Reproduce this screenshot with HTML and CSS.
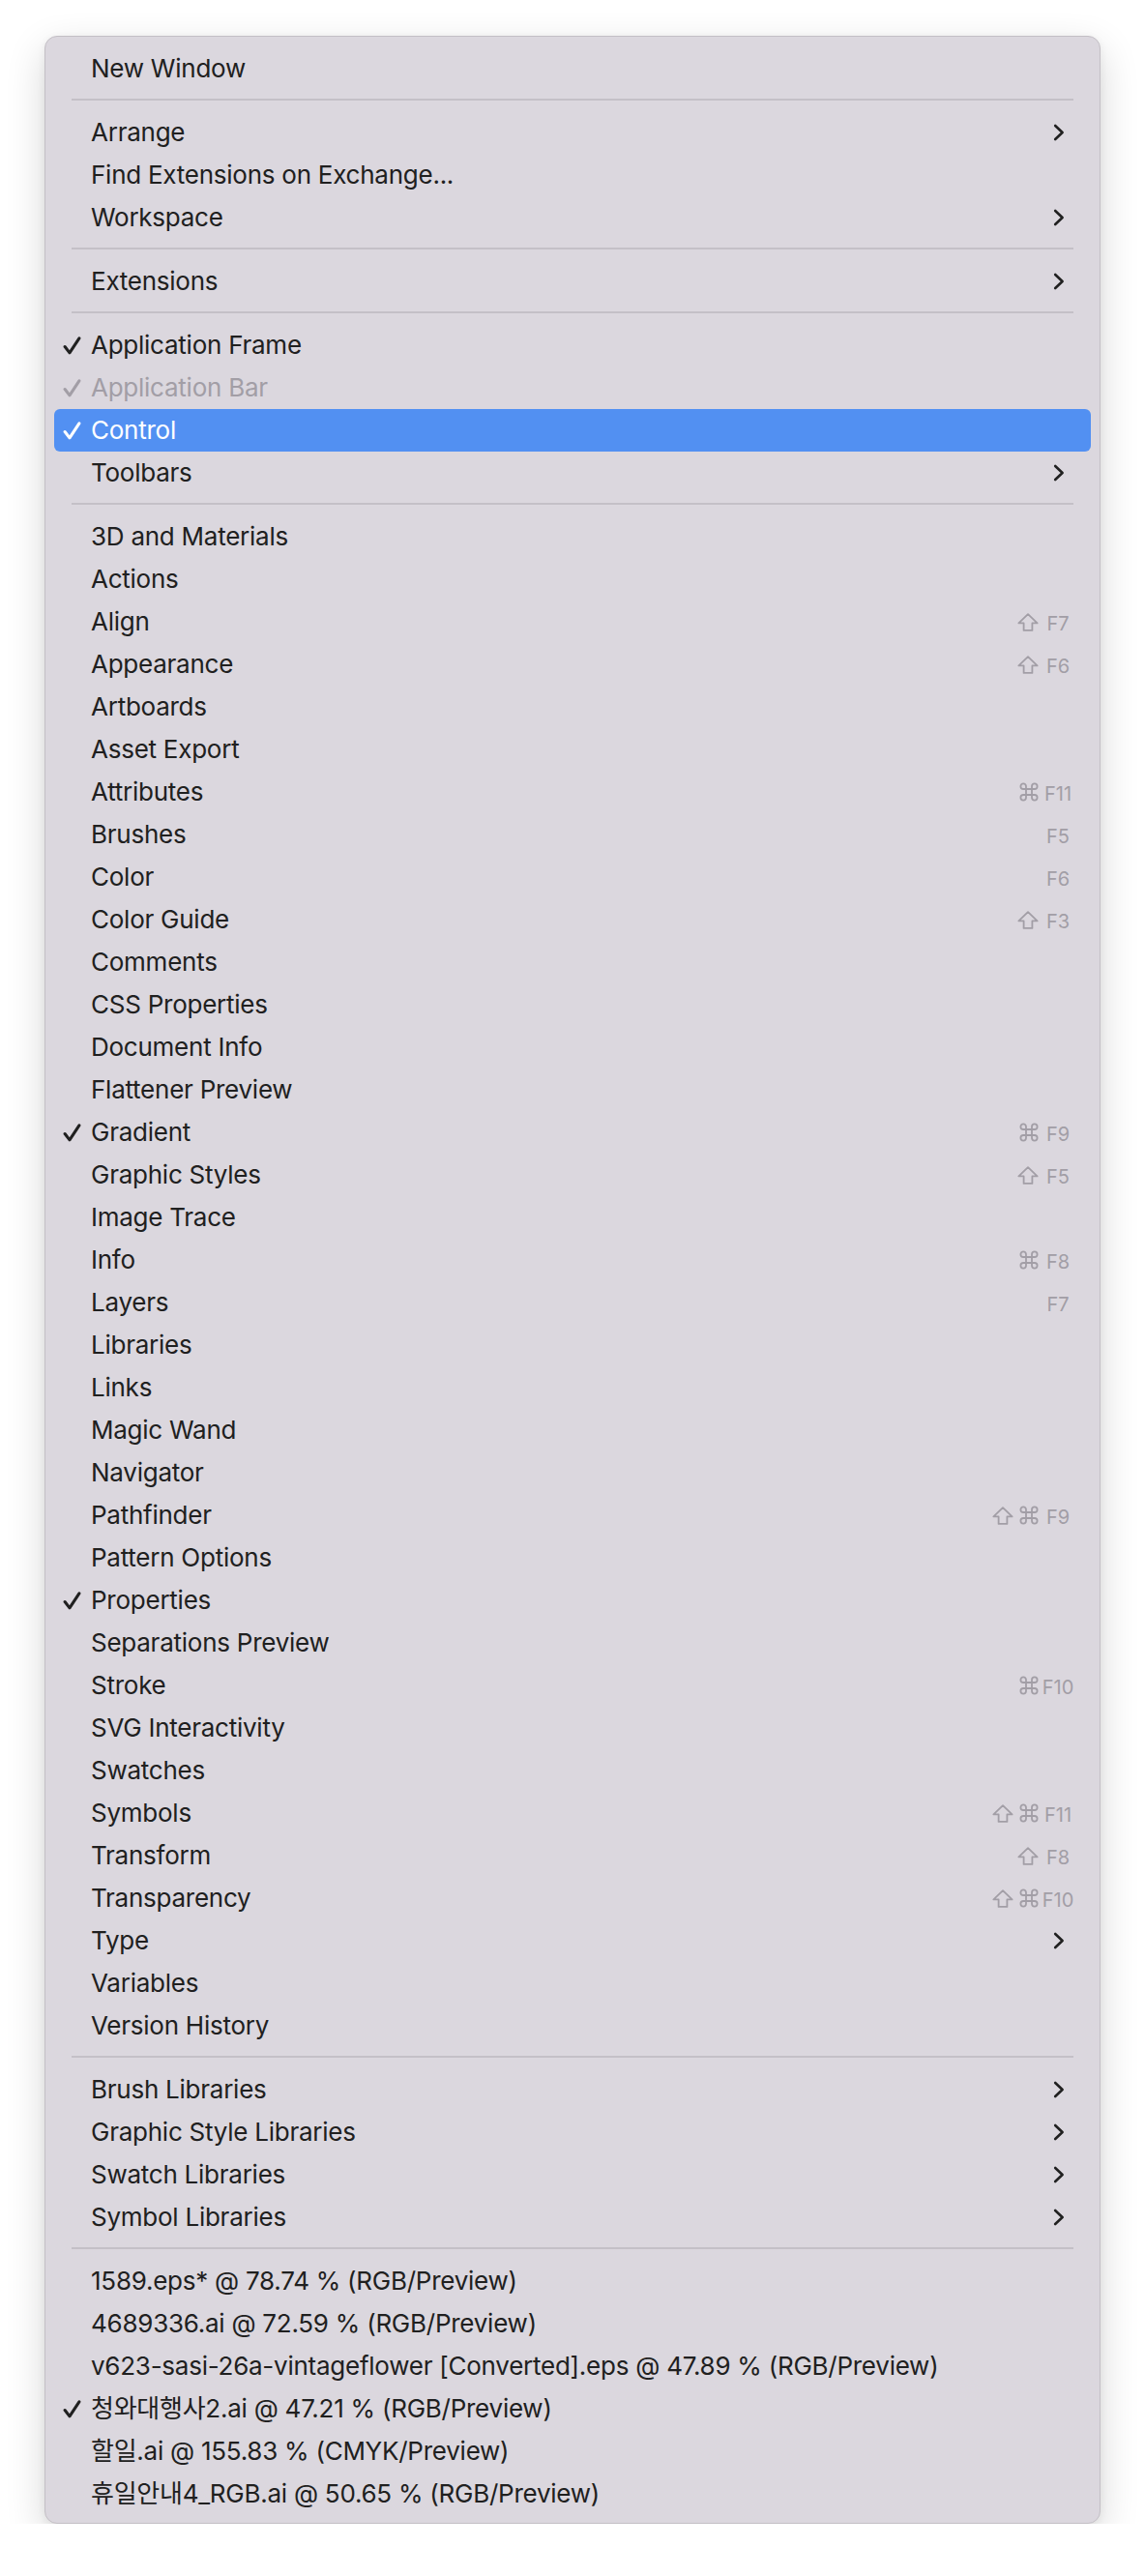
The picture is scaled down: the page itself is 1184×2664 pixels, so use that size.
FILE: index.html
```html
<!DOCTYPE html>
<html>
<head>
<meta charset="utf-8">
<link rel="stylesheet" href="styles.css">
</head>
<body>
<svg width="0" height="0" class="defs">
  <defs>
    <symbol id="chk" viewBox="0 0 18 18"><path d="M2 10 L6.6 16 L16 1.8" fill="none" stroke="currentColor" stroke-width="2.9" stroke-linecap="round" stroke-linejoin="round"/></symbol>
    <symbol id="chev" viewBox="0 0 12 18"><path d="M2.2 2 L9.6 9 L2.2 16" fill="none" stroke="currentColor" stroke-width="2.6" stroke-linecap="round" stroke-linejoin="round"/></symbol>
    <symbol id="shift" viewBox="0 0 22 19"><path d="M11 1.2 L1.4 10.4 H6.6 V17.9 H15.4 V10.4 H20.6 Z" fill="none" stroke="currentColor" stroke-width="1.8" stroke-linejoin="round"/></symbol>
    <symbol id="cmd" viewBox="0 0 20 20"><path d="M7 4.2 V15.8 M13 4.2 V15.8 M4.2 7 H15.8 M4.2 13 H15.8 M7 4.2 A2.8 2.8 0 1 0 4.2 7 M13 4.2 A2.8 2.8 0 1 1 15.8 7 M4.2 13 A2.8 2.8 0 1 0 7 15.8 M13 15.8 A2.8 2.8 0 1 0 15.8 13" fill="none" stroke="currentColor" stroke-width="1.8"/></symbol>
  </defs>
</svg>
<div class="menu">
  <div class="item"><span class="check"></span><span class="label">New Window</span></div>
  <div class="sep"></div>
  <div class="item"><span class="check"></span><span class="label">Arrange</span><svg class="chev"><use href="#chev"/></svg></div>
  <div class="item"><span class="check"></span><span class="label">Find Extensions on Exchange...</span></div>
  <div class="item"><span class="check"></span><span class="label">Workspace</span><svg class="chev"><use href="#chev"/></svg></div>
  <div class="sep"></div>
  <div class="item"><span class="check"></span><span class="label">Extensions</span><svg class="chev"><use href="#chev"/></svg></div>
  <div class="sep"></div>
  <div class="item"><span class="check"><svg><use href="#chk"/></svg></span><span class="label">Application Frame</span></div>
  <div class="item disabled"><span class="check"><svg><use href="#chk"/></svg></span><span class="label">Application Bar</span></div>
  <div class="item active"><span class="check"><svg><use href="#chk"/></svg></span><span class="label">Control</span></div>
  <div class="item"><span class="check"></span><span class="label">Toolbars</span><svg class="chev"><use href="#chev"/></svg></div>
  <div class="sep"></div>
  <div class="item"><span class="check"></span><span class="label">3D and Materials</span></div>
  <div class="item"><span class="check"></span><span class="label">Actions</span></div>
  <div class="item"><span class="check"></span><span class="label">Align</span><span class="sc"><span class="mods"><svg class="shift"><use href="#shift"/></svg></span><span class="key">F7</span></span></div>
  <div class="item"><span class="check"></span><span class="label">Appearance</span><span class="sc"><span class="mods"><svg class="shift"><use href="#shift"/></svg></span><span class="key">F6</span></span></div>
  <div class="item"><span class="check"></span><span class="label">Artboards</span></div>
  <div class="item"><span class="check"></span><span class="label">Asset Export</span></div>
  <div class="item"><span class="check"></span><span class="label">Attributes</span><span class="sc"><span class="mods"><svg class="cmd"><use href="#cmd"/></svg></span><span class="key">F11</span></span></div>
  <div class="item"><span class="check"></span><span class="label">Brushes</span><span class="sc"><span class="key">F5</span></span></div>
  <div class="item"><span class="check"></span><span class="label">Color</span><span class="sc"><span class="key">F6</span></span></div>
  <div class="item"><span class="check"></span><span class="label">Color Guide</span><span class="sc"><span class="mods"><svg class="shift"><use href="#shift"/></svg></span><span class="key">F3</span></span></div>
  <div class="item"><span class="check"></span><span class="label">Comments</span></div>
  <div class="item"><span class="check"></span><span class="label">CSS Properties</span></div>
  <div class="item"><span class="check"></span><span class="label">Document Info</span></div>
  <div class="item"><span class="check"></span><span class="label">Flattener Preview</span></div>
  <div class="item"><span class="check"><svg><use href="#chk"/></svg></span><span class="label">Gradient</span><span class="sc"><span class="mods"><svg class="cmd"><use href="#cmd"/></svg></span><span class="key">F9</span></span></div>
  <div class="item"><span class="check"></span><span class="label">Graphic Styles</span><span class="sc"><span class="mods"><svg class="shift"><use href="#shift"/></svg></span><span class="key">F5</span></span></div>
  <div class="item"><span class="check"></span><span class="label">Image Trace</span></div>
  <div class="item"><span class="check"></span><span class="label">Info</span><span class="sc"><span class="mods"><svg class="cmd"><use href="#cmd"/></svg></span><span class="key">F8</span></span></div>
  <div class="item"><span class="check"></span><span class="label">Layers</span><span class="sc"><span class="key">F7</span></span></div>
  <div class="item"><span class="check"></span><span class="label">Libraries</span></div>
  <div class="item"><span class="check"></span><span class="label">Links</span></div>
  <div class="item"><span class="check"></span><span class="label">Magic Wand</span></div>
  <div class="item"><span class="check"></span><span class="label">Navigator</span></div>
  <div class="item"><span class="check"></span><span class="label">Pathfinder</span><span class="sc"><span class="mods"><svg class="shift"><use href="#shift"/></svg><svg class="cmd"><use href="#cmd"/></svg></span><span class="key">F9</span></span></div>
  <div class="item"><span class="check"></span><span class="label">Pattern Options</span></div>
  <div class="item"><span class="check"><svg><use href="#chk"/></svg></span><span class="label">Properties</span></div>
  <div class="item"><span class="check"></span><span class="label">Separations Preview</span></div>
  <div class="item"><span class="check"></span><span class="label">Stroke</span><span class="sc"><span class="mods"><svg class="cmd"><use href="#cmd"/></svg></span><span class="key">F10</span></span></div>
  <div class="item"><span class="check"></span><span class="label">SVG Interactivity</span></div>
  <div class="item"><span class="check"></span><span class="label">Swatches</span></div>
  <div class="item"><span class="check"></span><span class="label">Symbols</span><span class="sc"><span class="mods"><svg class="shift"><use href="#shift"/></svg><svg class="cmd"><use href="#cmd"/></svg></span><span class="key">F11</span></span></div>
  <div class="item"><span class="check"></span><span class="label">Transform</span><span class="sc"><span class="mods"><svg class="shift"><use href="#shift"/></svg></span><span class="key">F8</span></span></div>
  <div class="item"><span class="check"></span><span class="label">Transparency</span><span class="sc"><span class="mods"><svg class="shift"><use href="#shift"/></svg><svg class="cmd"><use href="#cmd"/></svg></span><span class="key">F10</span></span></div>
  <div class="item"><span class="check"></span><span class="label">Type</span><svg class="chev"><use href="#chev"/></svg></div>
  <div class="item"><span class="check"></span><span class="label">Variables</span></div>
  <div class="item"><span class="check"></span><span class="label">Version History</span></div>
  <div class="sep"></div>
  <div class="item"><span class="check"></span><span class="label">Brush Libraries</span><svg class="chev"><use href="#chev"/></svg></div>
  <div class="item"><span class="check"></span><span class="label">Graphic Style Libraries</span><svg class="chev"><use href="#chev"/></svg></div>
  <div class="item"><span class="check"></span><span class="label">Swatch Libraries</span><svg class="chev"><use href="#chev"/></svg></div>
  <div class="item"><span class="check"></span><span class="label">Symbol Libraries</span><svg class="chev"><use href="#chev"/></svg></div>
  <div class="sep"></div>
  <div class="item"><span class="check"></span><span class="label">1589.eps* @ 78.74 % (RGB/Preview)</span></div>
  <div class="item"><span class="check"></span><span class="label">4689336.ai @ 72.59 % (RGB/Preview)</span></div>
  <div class="item"><span class="check"></span><span class="label">v623-sasi-26a-vintageflower [Converted].eps @ 47.89 % (RGB/Preview)</span></div>
  <div class="item"><span class="check"><svg><use href="#chk"/></svg></span><span class="label">청와대행사2.ai @ 47.21 % (RGB/Preview)</span></div>
  <div class="item"><span class="check"></span><span class="label">할일.ai @ 155.83 % (CMYK/Preview)</span></div>
  <div class="item"><span class="check"></span><span class="label">휴일안내4_RGB.ai @ 50.65 % (RGB/Preview)</span></div>
</div>
</body>
</html>
```

FILE: styles.css
```css
html, body {
  margin: 0;
  padding: 0;
  background: #ffffff;
}

.defs {
  position: absolute;
  width: 0;
  height: 0;
  overflow: hidden;
}

.menu {
  box-sizing: border-box;
  width: 1092px;
  margin: 37px 0 0 46px;
  padding: 11px 0 8px;
  background: #dbd7de;
  border: 1px solid #c3bfc5;
  border-radius: 13px;
  box-shadow: 0 14px 40px rgba(0, 0, 0, 0.16), 0 2px 8px rgba(0, 0, 0, 0.06);
  font-family: Inter, "Noto Sans CJK KR", sans-serif;
  font-size: 26px;
  color: #202020;
}

.item {
  display: flex;
  align-items: center;
  height: 44px;
  margin: 0 9px;
  padding: 0 16px 0 9px;
  border-radius: 6px;
}

.check {
  flex: none;
  width: 29px;
  height: 44px;
  display: flex;
  align-items: center;
}

.check svg {
  width: 19px;
  height: 19px;
  color: #202020;
}

.label {
  line-height: 44px;
  white-space: nowrap;
  letter-spacing: -0.25px;
}

.chev {
  flex: none;
  width: 12px;
  height: 18px;
  margin-left: auto;
  margin-right: 11px;
  color: #202020;
}

.sc {
  margin-left: auto;
  display: flex;
  align-items: center;
  height: 44px;
  color: #a29ea6;
}

.mods {
  display: flex;
  align-items: center;
  gap: 6px;
}

.shift {
  width: 22px;
  height: 19px;
}

.cmd {
  width: 20px;
  height: 20px;
}

.key {
  width: 36px;
  margin-left: 2px;
  padding-top: 4px;
  line-height: 40px;
  font-size: 20px;
  text-align: center;
}

.sep {
  height: 2px;
  margin: 9px 27px 11px;
  background: #c4c0c7;
}

.disabled .label,
.disabled .check svg {
  color: #a29ea6;
}

.active {
  background: #5290f2;
}

.active .label,
.active .check svg {
  color: #ffffff;
}
```
